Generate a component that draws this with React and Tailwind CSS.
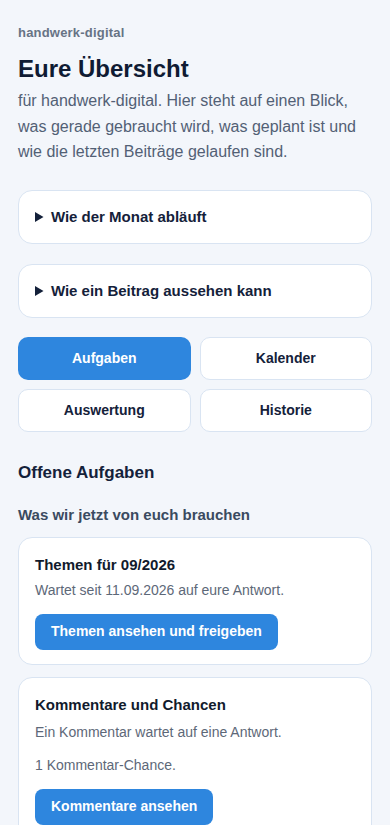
import React from 'react';

const tabs = ['Aufgaben', 'Kalender', 'Auswertung', 'Historie'];

function Disclosure({ title }) {
  return (
    <details className="bg-white border border-[#d9e4f2] rounded-[14px] px-4 py-[15px]">
      <summary className="cursor-pointer text-[15px] leading-[22px] font-bold text-[#14213a]">
        {title}
      </summary>
    </details>
  );
}

function TaskCard({ title, lines, action, firstGap }) {
  return (
    <div className="bg-white border border-[#d9e4f2] rounded-[14px] px-4 pt-[16px] pb-[14px]">
      <div className="text-[15px] leading-[22px] font-bold text-[#111a2c]">{title}</div>
      {lines.map((line, i) => (
        <p key={i} className={`text-[14px] leading-[20px] text-[#5d6878] ${i === 0 ? firstGap : 'mt-[13px]'}`}>
          {line}
        </p>
      ))}
      <button className="mt-[14px] h-[36px] px-4 rounded-[8px] bg-[#2e86de] text-white text-[14px] font-bold">
        {action}
      </button>
    </div>
  );
}

export default function App() {
  return (
    <div className="min-h-screen bg-[#f3f6fb] font-['Liberation_Sans',Arial,sans-serif] px-[18px] pt-[24px] pb-6">
      <div className="text-[13px] leading-[18px] font-bold text-[#677385] tracking-[0.2px]">handwerk-digital</div>
      <h1 className="mt-[12px] text-[24px] leading-[29px] font-bold text-[#0f1b33]">Eure Übersicht</h1>
      <p className="mt-[5px] text-[16px] leading-[25.6px] text-[#526075]">
        für handwerk-digital. Hier steht auf einen Blick, was gerade gebraucht wird, was geplant ist und wie die letzten Beiträge gelaufen sind.
      </p>

      <div className="mt-[25px] flex flex-col gap-[20px]">
        <Disclosure title="Wie der Monat abläuft" />
        <Disclosure title="Wie ein Beitrag aussehen kann" />
      </div>

      <div className="mt-[19px] grid grid-cols-2 gap-[9px]">
        {tabs.map((t, i) => (
          <button
            key={t}
            className={
              i === 0
                ? 'h-[43px] rounded-[10px] bg-[#2e86de] text-white text-[14px] font-bold'
                : 'h-[43px] rounded-[10px] bg-white border border-[#d9e4f2] text-[#14213a] text-[14px] font-bold'
            }
          >
            {t}
          </button>
        ))}
      </div>

      <h2 className="mt-[30px] text-[17px] leading-[22px] font-bold text-[#14213a]">Offene Aufgaben</h2>
      <h3 className="mt-[21px] text-[15px] leading-[20px] font-bold text-[#3a4a60]">Was wir jetzt von euch brauchen</h3>

      <div className="mt-[12px] flex flex-col gap-[12px]">
        <TaskCard
          title="Themen für 09/2026"
          lines={['Wartet seit 11.09.2026 auf eure Antwort.']}
          action="Themen ansehen und freigeben"
          firstGap="mt-[4px]"
        />
        <TaskCard
          title="Kommentare und Chancen"
          lines={['Ein Kommentar wartet auf eine Antwort.', '1 Kommentar-Chance.']}
          action="Kommentare ansehen"
          firstGap="mt-[6px]"
        />
      </div>
    </div>
  );
}
